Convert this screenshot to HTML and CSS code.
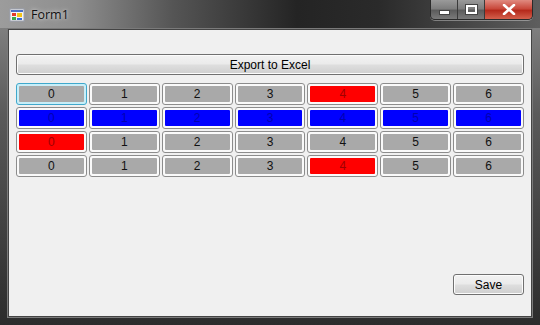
FILE: index.html
```html
<!DOCTYPE html>
<html lang="en">
<head>
  <meta charset="UTF-8" />
  <title>Form1</title>
  <link rel="stylesheet" href="styles.css">
</head>
<body>
  <div class="window">
    <div class="titlebar">
      <svg class="app-icon" width="16" height="16" viewBox="0 0 16 16">
        <rect x="1" y="2" width="14" height="12" fill="#f4f4f4" stroke="#9aa0b0"/>
        <rect x="2" y="3" width="12" height="2" fill="#4a6fc4"/>
        <rect x="3" y="6" width="4" height="3" fill="#e23a2a"/>
        <rect x="8" y="6" width="5" height="4" fill="#f2c418"/>
        <rect x="3" y="10" width="4" height="3" fill="#3aa84a"/>
        <rect x="8" y="11" width="5" height="2" fill="#3a6ad0"/>
      </svg>
      <span class="title">Form1</span>
      <div class="controls">
        <div class="ctl min"><span class="min-bar"></span></div>
        <div class="ctl max"><span class="max-box"></span></div>
        <div class="ctl close">
          <svg width="14" height="11" viewBox="0 0 14 11">
            <path d="M2 1 L12 10 M12 1 L2 10" stroke="#fff" stroke-width="2.6" stroke-linecap="round"/>
          </svg>
        </div>
      </div>
    </div>
    <div class="client">
      <button class="btn wide">Export to Excel</button>
      <div class="grid" id="grid"></div>
      <div class="bottom">
        <button class="btn save">Save</button>
      </div>
    </div>
  </div>

  <script>
    // 0 = gray, 1 = red, 2 = blue
    const rows = [
      [0, 0, 0, 0, 1, 0, 0],
      [2, 2, 2, 2, 2, 2, 2],
      [1, 0, 0, 0, 0, 0, 0],
      [0, 0, 0, 0, 1, 0, 0]
    ];
    const kinds = ['gray', 'red', 'blue'];
    const grid = document.getElementById('grid');

    rows.forEach((row, r) => {
      row.forEach((k, i) => {
        const cell = document.createElement('div');
        cell.className = 'cell ' + kinds[k];
        if (r === 0 && i === 0) cell.classList.add('focus');
        const inner = document.createElement('div');
        inner.className = 'fill';
        inner.textContent = i;
        cell.appendChild(inner);
        grid.appendChild(cell);
      });
    });
  </script>
</body>
</html>
```

FILE: styles.css
```css
body {
  margin: 0;
  width: 540px;
  height: 325px;
  overflow: hidden;
  background: #1e1e1e;
  font-family: "Liberation Sans", Arial, sans-serif;
}

.window {
  width: 540px;
  height: 325px;
  display: flex;
  flex-direction: column;
  background: linear-gradient(180deg, #8a8a8a 0%, #5a5a5a 35%, #2c2c2c 100%);
  box-sizing: border-box;
}

.titlebar {
  height: 28px;
  display: flex;
  align-items: flex-start;
  background: linear-gradient(90deg, #9c9c9c 0%, #8e8e8e 14%, #555 32%, #242424 55%, #2a2a2a 70%, #5e5e5e 100%);
}

.app-icon {
  margin: 7px 0 0 9px;
}

.title {
  margin: 6px 0 0 6px;
  font-family: "Open Sans", "DejaVu Sans", sans-serif;
  font-size: 12.5px;
  color: #111;
  text-shadow: 0 0 6px rgba(255, 255, 255, 0.6), 0 0 3px rgba(255, 255, 255, 0.5);
}

.controls {
  margin-left: auto;
  margin-right: 7px;
  display: flex;
  height: 19px;
  border: 1px solid #2a2a2a;
  border-top: none;
  border-radius: 0 0 5px 5px;
  overflow: hidden;
  box-shadow: 0 1px 0 rgba(255, 255, 255, 0.35);
}

.ctl {
  display: flex;
  align-items: center;
  justify-content: center;
  height: 19px;
  box-sizing: border-box;
}

.min, .max {
  width: 27px;
  background: linear-gradient(180deg, #9a9a9a 0%, #7e7e7e 45%, #5c5c5c 55%, #7a7a7a 100%);
  border-right: 1px solid #3a3a3a;
}

.min-bar {
  width: 9px;
  height: 3px;
  margin-top: 6px;
  background: #fff;
  border: 1px solid #444;
}

.max-box {
  width: 7px;
  height: 5px;
  border: 2px solid #fff;
  outline: 1px solid #444;
}

.close {
  width: 47px;
  background: linear-gradient(180deg, #e08a80 0%, #c9493c 45%, #b52a1c 55%, #d4604c 100%);
}

.client {
  flex: 1;
  margin: 1px 8px 8px 8px;
  background: #f0f0f0;
  border: 1px solid #444;
  outline: 1px solid #7a7a7a;
  padding: 24px 7px 0 7px;
  display: flex;
  flex-direction: column;
}

.btn {
  font-family: "Liberation Sans", Arial, sans-serif;
  font-size: 12px;
  color: #000;
  height: 21px;
  border: 1px solid #707070;
  border-radius: 3px;
  background: linear-gradient(180deg, #f2f2f2 0%, #ebebeb 45%, #dddddd 55%, #cfcfcf 100%);
  box-shadow: inset 0 0 0 1px #fcfcfc;
  padding: 0;
}

.wide {
  width: 100%;
}

.grid {
  margin-top: 8px;
  display: grid;
  grid-template-columns: repeat(7, 1fr);
  column-gap: 2px;
  row-gap: 2px;
}

.cell {
  height: 22px;
  border: 1px solid #8c8c8c;
  border-radius: 3px;
  background: #fafafa;
  padding: 2px;
  box-sizing: border-box;
}

.cell.focus {
  border-color: #3fa8cc;
  background: #c8eef8;
}

.fill {
  height: 100%;
  display: flex;
  align-items: center;
  justify-content: center;
  font-size: 12px;
  border-radius: 1px;
}

.gray .fill {
  background: #a9a9a9;
  color: #111;
}

.red .fill {
  background: #ff0000;
  color: #a00000;
}

.blue .fill {
  background: #0000ff;
  color: #0000b0;
}

.bottom {
  margin-top: auto;
  display: flex;
  justify-content: flex-end;
  padding-bottom: 21px;
}

.save {
  width: 71px;
}
```
